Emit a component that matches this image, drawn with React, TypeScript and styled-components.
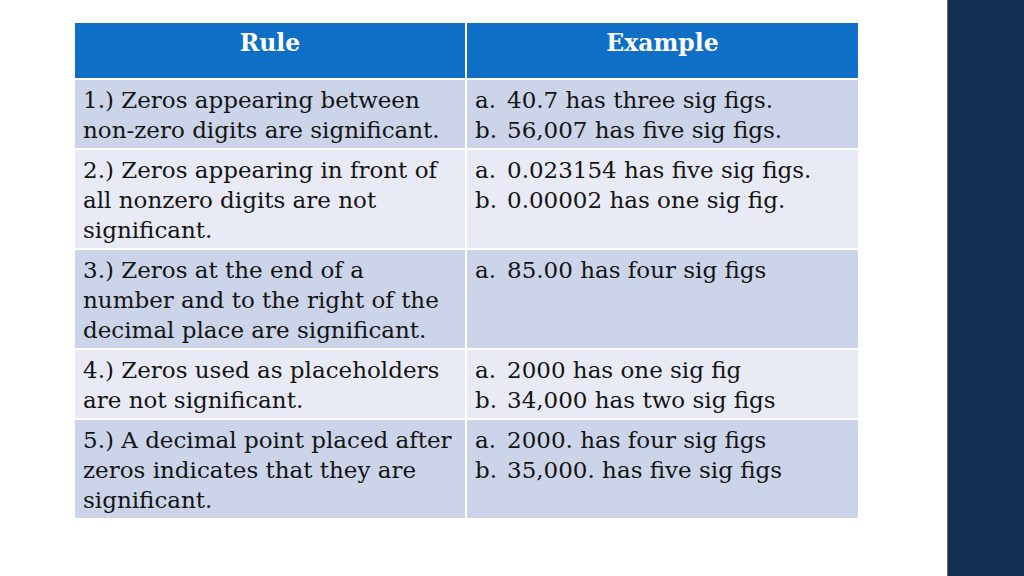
import React from "react";
import styled, { createGlobalStyle } from "styled-components";

const GlobalStyle = createGlobalStyle`
  html, body {
    margin: 0;
    padding: 0;
    background: #ffffff;
  }
  body {
    font-family: "DejaVu Serif", "Liberation Serif", serif;
  }
`;

const Slide = styled.div`
  display: flex;
  width: 1024px;
  height: 576px;
  overflow: hidden;
`;

const Content = styled.div`
  flex: 1;
  padding: 23px 0 0 75px;
`;

const SideBar = styled.div`
  width: 76px;
  background-color: #132f52;
  border-left: 1px solid #5a7090;
`;

const Table = styled.div`
  display: grid;
  grid-template-columns: 390px 391px;
  gap: 2px;
  width: 783px;
`;

const HeaderCell = styled.div`
  background-color: #0f6fc6;
  color: #ffffff;
  font-weight: 700;
  font-size: 23.5px;
  text-align: center;
  height: 55px;
  line-height: 41px;
`;

const Cell = styled.div<{ $shade: boolean }>`
  background-color: ${(p) => (p.$shade ? "#cbd4e9" : "#e8ebf5")};
  color: #141414;
  font-size: 23px;
  line-height: 30px;
  padding: 5px 4px 3px 8px;
  white-space: nowrap;
  overflow: hidden;
`;

const Line = styled.div`
  height: 30px;
`;

const ExampleList = styled.div`
  display: grid;
  grid-template-columns: 32px 1fr;
  grid-auto-rows: 30px;
`;

const rows = [
  {
    rule: ["1.) Zeros appearing between", "non-zero digits are significant."],
    examples: ["40.7 has three sig figs.", "56,007 has five sig figs."],
  },
  {
    rule: ["2.) Zeros appearing in front of", "all nonzero digits are not", "significant."],
    examples: ["0.023154 has five sig figs.", "0.00002 has one sig fig."],
  },
  {
    rule: ["3.) Zeros at the end of a", "number and to the right of the", "decimal place are significant."],
    examples: ["85.00 has four sig figs"],
  },
  {
    rule: ["4.) Zeros used as placeholders", "are not significant."],
    examples: ["2000 has one sig fig", "34,000 has two sig figs"],
  },
  {
    rule: ["5.) A decimal point placed after", "zeros indicates that they are", "significant."],
    examples: ["2000. has four sig figs", "35,000. has five sig figs"],
  },
];

const letters = ["a.", "b."];

const App = () => {
  return (
    <>
      <GlobalStyle />
      <Slide>
        <Content>
          <Table>
            <HeaderCell>Rule</HeaderCell>
            <HeaderCell>Example</HeaderCell>
            {rows.map((row, i) => (
              <React.Fragment key={i}>
                <Cell $shade={i % 2 === 0}>
                  {row.rule.map((line, k) => (
                    <Line key={k}>{line}</Line>
                  ))}
                </Cell>
                <Cell $shade={i % 2 === 0}>
                  <ExampleList>
                    {row.examples.map((ex, j) => (
                      <React.Fragment key={j}>
                        <span>{letters[j]}</span>
                        <span>{ex}</span>
                      </React.Fragment>
                    ))}
                  </ExampleList>
                </Cell>
              </React.Fragment>
            ))}
          </Table>
        </Content>
        <SideBar />
      </Slide>
    </>
  );
};

export default App;
